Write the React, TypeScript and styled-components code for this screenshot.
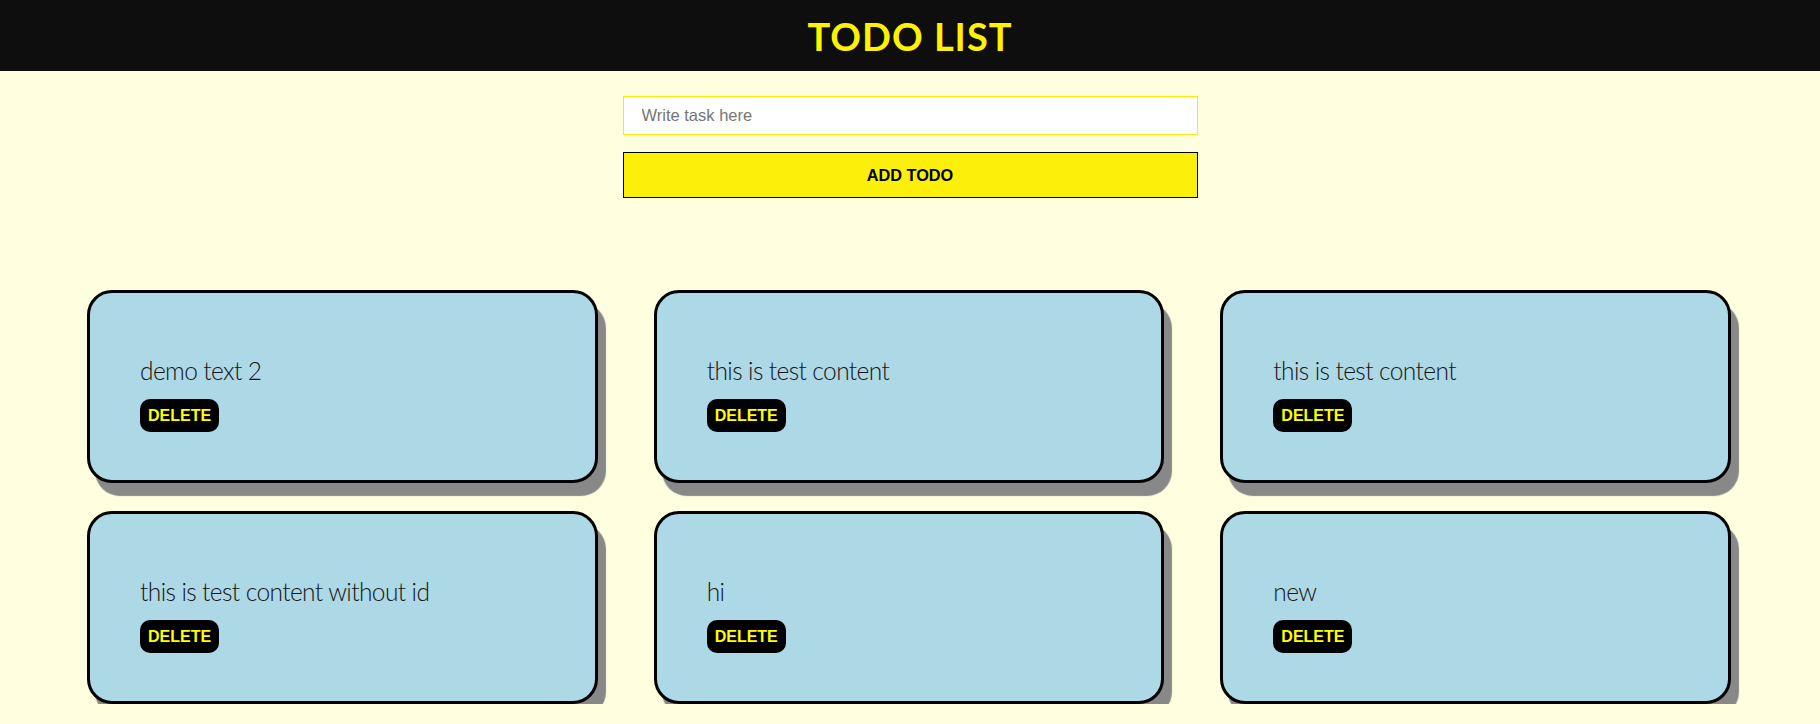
import React from "react";
import styled, { createGlobalStyle } from "styled-components";

const GlobalStyle = createGlobalStyle`
  html, body {
    margin: 0;
    padding: 0;
    background: #ffffe0;
  }
  body {
    font-family: "Liberation Sans", Arial, sans-serif;
  }
`;

const Header = styled.header`
  height: 71px;
  background: #0e0e0e;
  display: flex;
  align-items: center;
  justify-content: center;
`;

const Title = styled.h1`
  margin: 0;
  font-family: Lato, "Open Sans", sans-serif;
  font-weight: 700;
  font-size: 38px;
  letter-spacing: 1px;
  color: #fff200;
`;

const Form = styled.form`
  width: 575px;
  margin: 25px auto 0;
  display: flex;
  flex-direction: column;
  gap: 17px;
`;

const TaskInput = styled.input`
  box-sizing: border-box;
  height: 39px;
  width: 100%;
  border: 1px solid #ffe900;
  background: #ffffff;
  padding: 0 18px;
  font-family: "Liberation Sans", Arial, sans-serif;
  font-size: 16.5px;
  color: #222;
  outline: none;
  &::placeholder {
    color: #757575;
  }
`;

const AddButton = styled.button`
  box-sizing: border-box;
  height: 46px;
  width: 100%;
  background: #fcf00a;
  border: 1px solid #000;
  font-family: "Liberation Sans", Arial, sans-serif;
  font-weight: 700;
  font-size: 16.3px;
  color: #000;
  cursor: pointer;
`;

const Grid = styled.section`
  margin-top: 92px;
  padding: 0 89px 0 87px;
  display: grid;
  grid-template-columns: repeat(3, 1fr);
  column-gap: 56px;
  row-gap: 28px;
`;

const Card = styled.div`
  box-sizing: border-box;
  height: 193px;
  background: #add8e6;
  border: 3px solid #000;
  border-radius: 25px;
  box-shadow: 8px 13px 1px #888;
  padding: 64px 50px 0 50px;
  display: flex;
  flex-direction: column;
  align-items: flex-start;
`;

const CardText = styled.p`
  margin: 0 0 13px;
  font-family: Lato, "Open Sans", sans-serif;
  font-size: 24.5px;
  font-weight: 300;
  letter-spacing: -0.6px;
  line-height: 28.8px;
  color: #141414;
`;

const DeleteButton = styled.button`
  background: #000;
  color: #ffff00;
  border: none;
  border-radius: 10px;
  padding: 7px 8px;
  font-family: "Liberation Sans", Arial, sans-serif;
  font-weight: 700;
  font-size: 16px;
  line-height: 19px;
  cursor: pointer;
`;

const todos = [
  "demo text 2",
  "this is test content",
  "this is test content",
  "this is test content without id",
  "hi",
  "new",
];

export default function App() {
  return (
    <>
      <GlobalStyle />
      <Header>
        <Title>TODO LIST</Title>
      </Header>
      <Form onSubmit={(e) => e.preventDefault()}>
        <TaskInput type="text" placeholder="Write task here" />
        <AddButton type="submit">ADD TODO</AddButton>
      </Form>
      <Grid>
        {todos.map((t, i) => (
          <Card key={i}>
            <CardText>{t}</CardText>
            <DeleteButton type="button">DELETE</DeleteButton>
          </Card>
        ))}
      </Grid>
    </>
  );
}
